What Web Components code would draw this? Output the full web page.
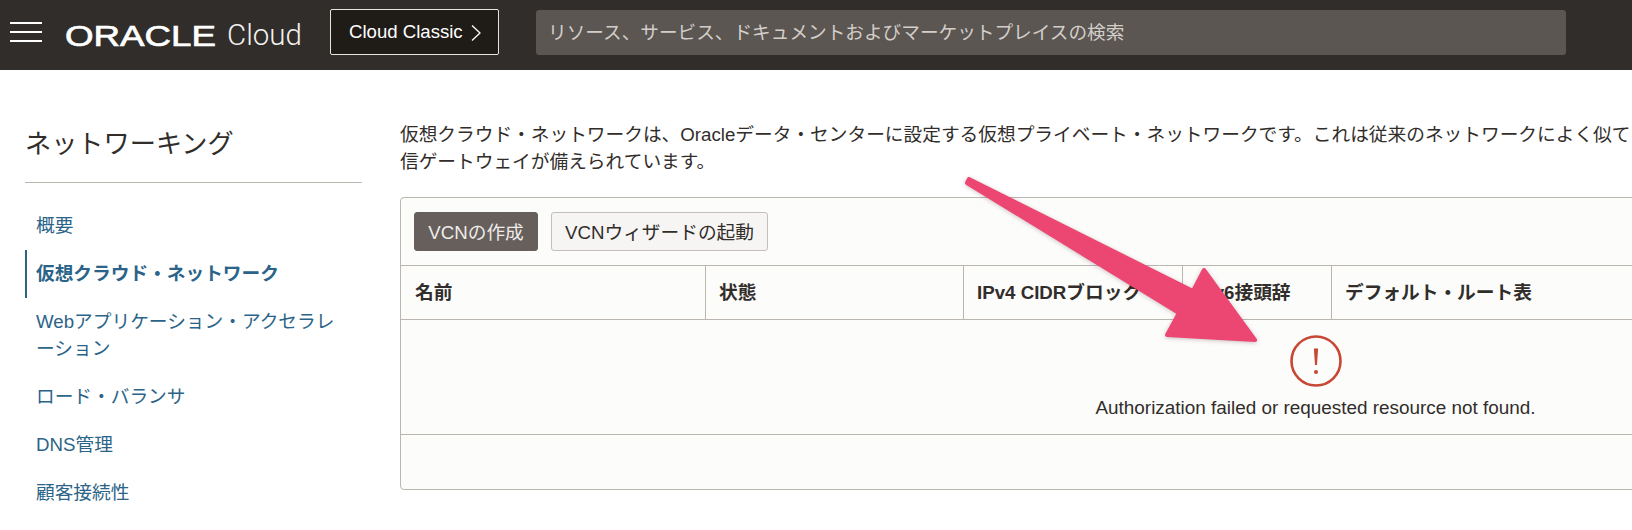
<!DOCTYPE html>
<html lang="ja">
<head>
<meta charset="utf-8">
<title>ネットワーキング</title>
<style>
  html, body {
    margin: 0;
    height: 530px;
    overflow: hidden;
    background: #fff;
    font-family: "Liberation Sans", "Noto Sans CJK JP", sans-serif;
    color: #312d2a;
  }
</style>
</head>
<body>
<oci-page></oci-page>
<script>
class OciHeader extends HTMLElement {
  constructor() {
    super();
    this.attachShadow({ mode: 'open' });
    this.shadowRoot.innerHTML = `
      <style>
        :host {
          display: flex;
          align-items: center;
          height: 70px;
          background: #312d2a;
          color: #fff;
          padding-left: 10px;
          box-sizing: border-box;
        }
        .menu {
          display: flex;
          flex-direction: column;
          gap: 7px;
          width: 32px;
          margin-bottom: 6px;
        }
        .menu span { height: 2px; background: #fff; }
        .logo { display: block; margin-left: 22px; width: 153px; height: 38px; margin-bottom: 1px; }
        .logo text { font: 400 30px "Liberation Sans", sans-serif; fill: #fff; stroke: #fff; stroke-width: .7px; }
        .cloud {
          font: 300 29.5px Roboto, sans-serif;
          margin-left: 10px;
          width: 76px;
          color: #f4f2f0;
        }
        .classic {
          display: flex;
          align-items: center;
          gap: 8px;
          box-sizing: border-box;
          height: 46px;
          width: 169px;
          margin-left: 27px;
          margin-bottom: 6px;
          padding-left: 18px;
          background: #1f1c18;
          border: 1px solid #e6e3e0;
          border-radius: 2px;
          font-size: 18.6px;
          white-space: nowrap;
        }
        .classic svg { margin-top: 2px; }
        .search {
          box-sizing: border-box;
          flex: none;
          width: 1030px;
          height: 45px;
          line-height: 46px;
          margin-left: 37px;
          margin-bottom: 5px;
          padding-left: 12px;
          background: #5b5652;
          border-radius: 3px;
          color: #d3cec9;
          font-size: 18.65px;
        }
      </style>
      <div class="menu"><span></span><span></span><span></span></div>
      <svg class="logo" viewBox="0 0 153 38">
        <text x="1" y="30" textLength="151" lengthAdjust="spacingAndGlyphs">ORACLE</text>
      </svg>
      <div class="cloud">Cloud</div>
      <div class="classic">Cloud Classic
        <svg width="10" height="16" viewBox="0 0 10 16"><path d="M1 .5 9 8 1 15.5" fill="none" stroke="#fff" stroke-width="1.3"/></svg>
      </div>
      <div class="search">リソース、サービス、ドキュメントおよびマーケットプレイスの検索</div>
    `;
  }
}

class NavItem extends HTMLElement {
  constructor() {
    super();
    this.attachShadow({ mode: 'open' });
    this.shadowRoot.innerHTML = `
      <style>
        :host {
          display: block;
          padding: 9.5px 0 11.5px 11px;
          line-height: 27px;
          font-size: 18.7px;
          color: #2b6488;
        }
        :host([active]) {
          font-weight: 700;
          padding-left: 9px;
          border-left: 2px solid #2b6488;
        }
      </style>
      <slot></slot>
    `;
  }
}

class OciSidebar extends HTMLElement {
  constructor() {
    super();
    this.attachShadow({ mode: 'open' });
    this.shadowRoot.innerHTML = `
      <style>
        :host { display: block; flex: none; width: 337px; padding-top: 51px; }
        h2 {
          margin: 0 0 19px;
          padding-bottom: 24px;
          height: 37px;
          line-height: 46px;
          font-size: 26.2px;
          font-weight: 400;
          border-bottom: 1px solid #bcb6b1;
        }
      </style>
      <h2>ネットワーキング</h2>
      <slot></slot>
    `;
  }
}

class ErrorState extends HTMLElement {
  constructor() {
    super();
    this.attachShadow({ mode: 'open' });
    this.shadowRoot.innerHTML = `
      <style>
        :host {
          display: flex;
          flex-direction: column;
          align-items: center;
          height: 115px;
          padding-top: 15px;
          box-sizing: border-box;
          border-bottom: 1px solid #bcb6b1;
        }
        svg { display: block; }
        p { margin: 7px 0 0; line-height: 27px; font-size: 18.9px; color: #312d2a; white-space: nowrap; }
      </style>
      <svg width="52" height="52" viewBox="0 0 52 52">
        <circle cx="26" cy="26" r="24.5" fill="none" stroke="#c74634" stroke-width="2.6"/>
        <path d="M23.9 13.5h4.2L27 30h-2z" fill="#c74634"/>
        <circle cx="26" cy="37" r="2" fill="#c74634"/>
      </svg>
      <p><slot></slot></p>
    `;
  }
}

class VcnPanel extends HTMLElement {
  constructor() {
    super();
    this.attachShadow({ mode: 'open' });
    this.shadowRoot.innerHTML = `
      <style>
        :host {
          display: block;
          box-sizing: border-box;
          width: 1831px;
          height: 293px;
          background: #fcfcfa;
          border: 1px solid #bcb6b1;
          border-radius: 4px;
          font-size: 18.7px;
        }
        .toolbar {
          display: flex;
          gap: 13px;
          height: 68px;
          box-sizing: border-box;
          padding: 14px 13px;
          border-bottom: 1px solid #bcb6b1;
        }
        button {
          box-sizing: border-box;
          height: 39px;
          padding: 0 0 2px;
          font: inherit;
          border-radius: 3px;
          border: 1px solid #c4bfbb;
          background: #f7f5f4;
          color: #312d2a;
          white-space: nowrap;
        }
        button.primary { width: 124px; background: #665f5b; border-color: #665f5b; color: #eeecea; }
        button.second { width: 217px; }
        .head {
          display: grid;
          grid-template-columns: 304px 258px 219px 149px 1fr;
          height: 54px;
          box-sizing: border-box;
          border-bottom: 1px solid #bcb6b1;
          font-weight: 700;
          line-height: 53px;
        }
        .head div { padding-left: 13px; border-left: 1px solid #bcb6b1; white-space: nowrap; }
        .head div:first-child { padding-left: 14px; border-left: 0; }
      </style>
      <div class="toolbar">
        <button class="primary">VCNの作成</button>
        <button class="second">VCNウィザードの起動</button>
      </div>
      <div class="head">
        <div>名前</div>
        <div>状態</div>
        <div>IPv4 CIDRブロック</div>
        <div>IPv6接頭辞</div>
        <div>デフォルト・ルート表</div>
      </div>
      <slot></slot>
    `;
  }
}

class AnnotationArrow extends HTMLElement {
  constructor() {
    super();
    this.attachShadow({ mode: 'open' });
    this.shadowRoot.innerHTML = `
      <style>
        :host { position: absolute; left: 960px; top: 170px; width: 305px; height: 180px; }
        svg { display: block; filter: drop-shadow(0 1px 2px rgba(60, 20, 30, .25)); }
      </style>
      <svg width="305" height="180" viewBox="960 170 305 180">
        <path d="M969 179 1193 291 1204 270 1255 340 1167 335 1179 313 967 183Z"
              fill="#ec4672" stroke="#ec4672" stroke-width="4" stroke-linejoin="round"/>
      </svg>
    `;
  }
}

class OciPage extends HTMLElement {
  constructor() {
    super();
    this.attachShadow({ mode: 'open' });
    this.shadowRoot.innerHTML = `
      <style>
        :host { display: block; position: relative; width: 1632px; height: 530px; overflow: hidden; }
        .layout { display: flex; gap: 38px; padding-left: 25px; }
        main { flex: none; padding-top: 51px; }
        .intro { margin: 0 0 22px; font-size: 18.7px; line-height: 27px; white-space: nowrap; }
      </style>
      <oci-header></oci-header>
      <div class="layout">
        <oci-sidebar>
          <nav-item>概要</nav-item>
          <nav-item active>仮想クラウド・ネットワーク</nav-item>
          <nav-item>Webアプリケーション・アクセラレ<br>ーション</nav-item>
          <nav-item>ロード・バランサ</nav-item>
          <nav-item>DNS管理</nav-item>
          <nav-item>顧客接続性</nav-item>
        </oci-sidebar>
        <main>
          <p class="intro">仮想クラウド・ネットワークは、Oracleデータ・センターに設定する仮想プライベート・ネットワークです。これは従来のネットワークによく似て<br>信ゲートウェイが備えられています。</p>
          <vcn-panel>
            <error-state>Authorization failed or requested resource not found.</error-state>
          </vcn-panel>
        </main>
      </div>
      <annotation-arrow></annotation-arrow>
    `;
  }
}

customElements.define('oci-header', OciHeader);
customElements.define('nav-item', NavItem);
customElements.define('oci-sidebar', OciSidebar);
customElements.define('error-state', ErrorState);
customElements.define('vcn-panel', VcnPanel);
customElements.define('annotation-arrow', AnnotationArrow);
customElements.define('oci-page', OciPage);
</script>
</body>
</html>
